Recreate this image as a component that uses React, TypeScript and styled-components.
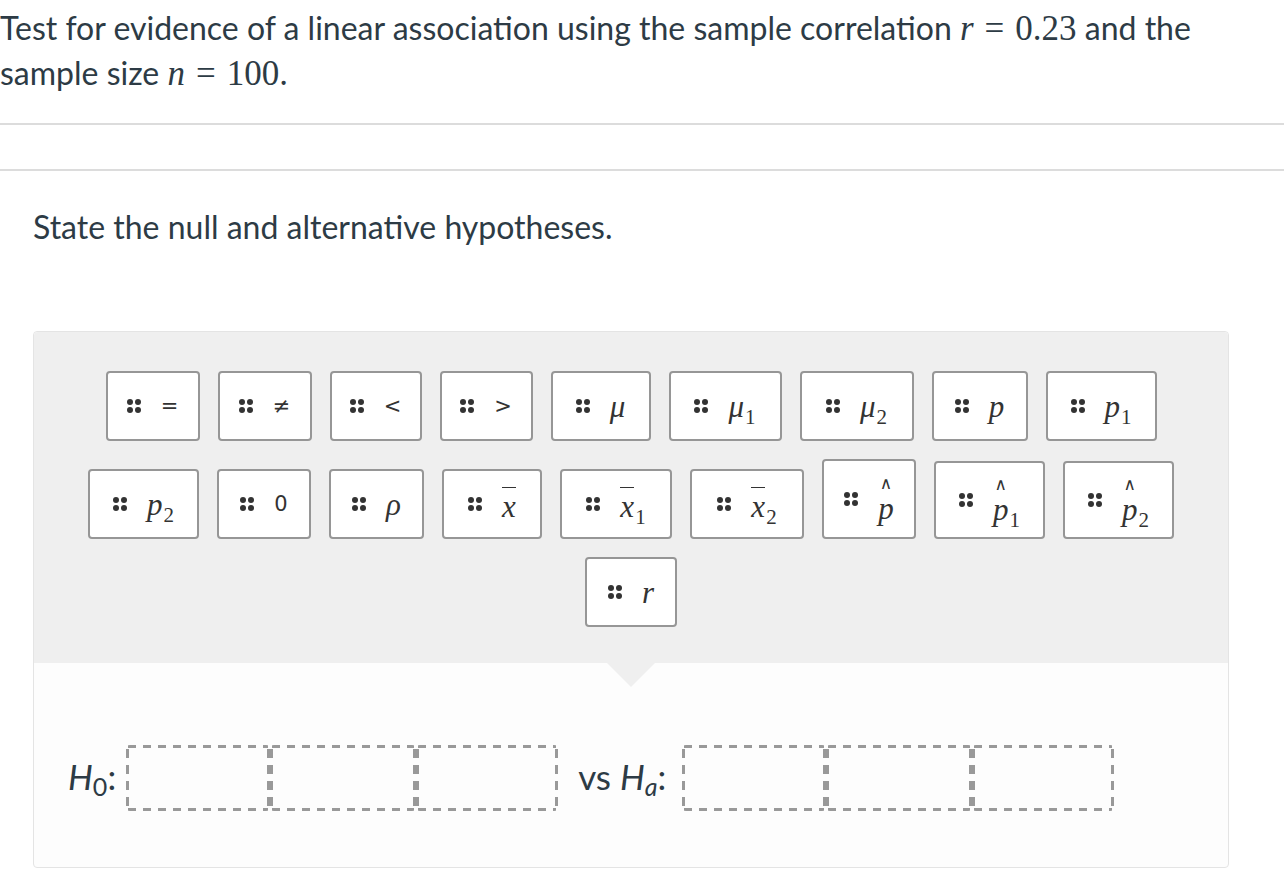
import React from 'react';
import styled, { createGlobalStyle } from 'styled-components';

const GlobalStyle = createGlobalStyle`
    body {
        margin: 0;
        background: #ffffff;
        font-family: Lato, "Open Sans", sans-serif;
        color: #2d3b45;
    }
`;

const mathFont = `"Liberation Serif", "DejaVu Serif", serif`;
const dash = '#999999';

const StyledMain = styled.main`
    width: 1284px;
`;
const StyledPrompt = styled.p`
    margin: 0;
    padding-top: 6px;
    font-size: 32px;
    line-height: 44px;
`;
const StyledRule = styled.hr<{ $top: number }>`
    margin: ${p => p.$top}px 0 0;
    border: 0;
    height: 2px;
    background: #dcdcdc;
`;
const StyledQuestion = styled.p`
    margin: 34px 0 0 33px;
    font-size: 32px;
    line-height: 44px;
`;
const M = styled.span<{ $up?: boolean }>`
    font-family: ${mathFont};
    font-style: ${p => (p.$up ? 'normal' : 'italic')};
    font-size: 35px;
`;
const Rel = styled.span`
    font-family: ${mathFont};
    font-size: 35px;
    margin: 0 11px;
`;

const StyledPanel = styled.section`
    margin: 82px 0 0 33px;
    width: 1194px;
    border: 1px solid #e4e4e4;
    border-radius: 4px;
    background: #fdfdfd;
`;
const StyledPalette = styled.div`
    position: relative;
    background: #efefef;
    padding: 39px 0 36px;
    display: flex;
    flex-direction: column;
    gap: 18px;
    border-radius: 4px 4px 0 0;
`;
const StyledPointer = styled.div`
    position: absolute;
    left: 50%;
    bottom: -24px;
    margin-left: -24px;
    width: 0;
    height: 0;
    border-left: 24px solid transparent;
    border-right: 24px solid transparent;
    border-top: 24px solid #efefef;
`;
const StyledRow = styled.div`
    display: flex;
    justify-content: center;
    align-items: flex-end;
    gap: 18px;
`;
const StyledTile = styled.div<{ $w: number; $h?: number }>`
    box-sizing: border-box;
    width: ${p => p.$w}px;
    height: ${p => p.$h || 70}px;
    background: #ffffff;
    border: 2px solid #969696;
    border-radius: 4px;
    display: flex;
    align-items: center;
    justify-content: center;
    gap: 20px;
    color: #333333;
`;
const StyledGrip = styled.span`
    display: grid;
    grid-template-columns: 6px 6px;
    gap: 2px;
    span {
        width: 6px;
        height: 6px;
        border-radius: 50%;
        background: #333333;
    }
`;
const StyledSym = styled.span`
    font-family: "DejaVu Sans", Lato, sans-serif;
    font-size: 21px;
    line-height: 1;
`;
const StyledVar = styled.span`
    font-family: ${mathFont};
    font-style: italic;
    font-size: 31px;
    line-height: 1;
    display: inline-flex;
    align-items: flex-end;
    sub {
        font-style: normal;
        font-size: 21px;
        vertical-align: baseline;
        margin-bottom: -6px;
        margin-left: 1px;
    }
`;
const StyledBar = styled.span`
    border-top: 1px solid #333333;
    padding-top: 3px;
`;
const StyledHat = styled.span`
    display: inline-flex;
    flex-direction: column;
    align-items: center;
    i {
        font-family: "DejaVu Sans", sans-serif;
        font-style: normal;
        font-size: 17px;
        line-height: 1;
        margin-bottom: 1px;
    }
`;

const StyledAnswer = styled.div`
    padding: 82px 34px 56px;
    display: flex;
    align-items: center;
    font-size: 35px;
`;
const StyledLabel = styled.span<{ $gap: number; $lead?: number }>`
    margin-right: ${p => p.$gap}px;
    margin-left: ${p => p.$lead || 0}px;
    white-space: nowrap;
    em {
        font-style: italic;
    }
    sub {
        font-size: 25px;
        vertical-align: -6px;
        font-style: normal;
    }
    .a {
        font-style: italic;
    }
`;
const StyledSlots = styled.div`
    display: flex;
`;
const StyledSlot = styled.div<{ $w: number }>`
    box-sizing: border-box;
    width: ${p => p.$w}px;
    height: 66px;
    border-radius: 4px;
    background:
        repeating-linear-gradient(90deg, ${dash} 0 8px, transparent 8px 15px) 2px 0 / calc(100% - 4px) 3px no-repeat,
        repeating-linear-gradient(90deg, ${dash} 0 8px, transparent 8px 15px) 2px 100% / calc(100% - 4px) 3px no-repeat,
        repeating-linear-gradient(180deg, ${dash} 0 9px, transparent 9px 16px) 0 4px / 3px calc(100% - 8px) no-repeat,
        repeating-linear-gradient(180deg, ${dash} 0 9px, transparent 9px 16px) 100% 4px / 3px calc(100% - 8px) no-repeat;
`;

const Grip = () => (
    <StyledGrip>
        <span />
        <span />
        <span />
        <span />
    </StyledGrip>
);

interface TileDef {
    w: number;
    h?: number;
    label: React.ReactNode;
}

const sym = (s: string) => <StyledSym>{s}</StyledSym>;
const v = (s: string, sub?: string) => (
    <StyledVar>
        {s}
        {sub && <sub>{sub}</sub>}
    </StyledVar>
);
const bar = (sub?: string) => (
    <StyledVar>
        <StyledBar>x</StyledBar>
        {sub && <sub>{sub}</sub>}
    </StyledVar>
);
const hat = (sub?: string) => (
    <StyledVar>
        <StyledHat>
            <i>∧</i>p
        </StyledHat>
        {sub && <sub>{sub}</sub>}
    </StyledVar>
);

const ROWS: TileDef[][] = [
    [
        { w: 94, label: sym('=') },
        { w: 94, label: sym('≠') },
        { w: 92, label: sym('<') },
        { w: 93, label: sym('>') },
        { w: 100, label: v('μ') },
        { w: 113, label: v('μ', '1') },
        { w: 114, label: v('μ', '2') },
        { w: 96, label: v('p') },
        { w: 111, label: v('p', '1') }
    ],
    [
        { w: 111, label: v('p', '2') },
        { w: 94, label: sym('0') },
        { w: 95, label: v('ρ') },
        { w: 100, label: bar() },
        { w: 112, label: bar('1') },
        { w: 114, label: bar('2') },
        { w: 94, h: 80, label: hat() },
        { w: 111, h: 78, label: hat('1') },
        { w: 111, h: 78, label: hat('2') }
    ],
    [{ w: 92, label: v('r') }]
];

const Slots = () => (
    <StyledSlots>
        <StyledSlot $w={144} />
        <StyledSlot $w={146} />
        <StyledSlot $w={142} />
    </StyledSlots>
);

const App: React.FC = () => {
    return (
        <StyledMain>
            <GlobalStyle />
            <StyledPrompt>
                Test for evidence of a linear association using the sample correlation <M>r</M>
                <Rel>=</Rel>
                <M $up>0.23</M> and the
                <br />
                sample size <M>n</M>
                <Rel>=</Rel>
                <M $up>100.</M>
            </StyledPrompt>
            <StyledRule $top={27} />
            <StyledRule $top={44} />
            <StyledQuestion>State the null and alternative hypotheses.</StyledQuestion>
            <StyledPanel>
                <StyledPalette>
                    {ROWS.map((row, i) => (
                        <StyledRow key={i}>
                            {row.map((t, j) => (
                                <StyledTile key={j} $w={t.w} $h={t.h}>
                                    <Grip />
                                    {t.label}
                                </StyledTile>
                            ))}
                        </StyledRow>
                    ))}
                    <StyledPointer />
                </StyledPalette>
                <StyledAnswer>
                    <StyledLabel $gap={10}>
                        <em>H</em>
                        <sub>0</sub>:
                    </StyledLabel>
                    <Slots />
                    <StyledLabel $gap={16} $lead={20}>
                        vs <em>H</em>
                        <sub className="a">a</sub>:
                    </StyledLabel>
                    <Slots />
                </StyledAnswer>
            </StyledPanel>
        </StyledMain>
    );
};

export default App;
